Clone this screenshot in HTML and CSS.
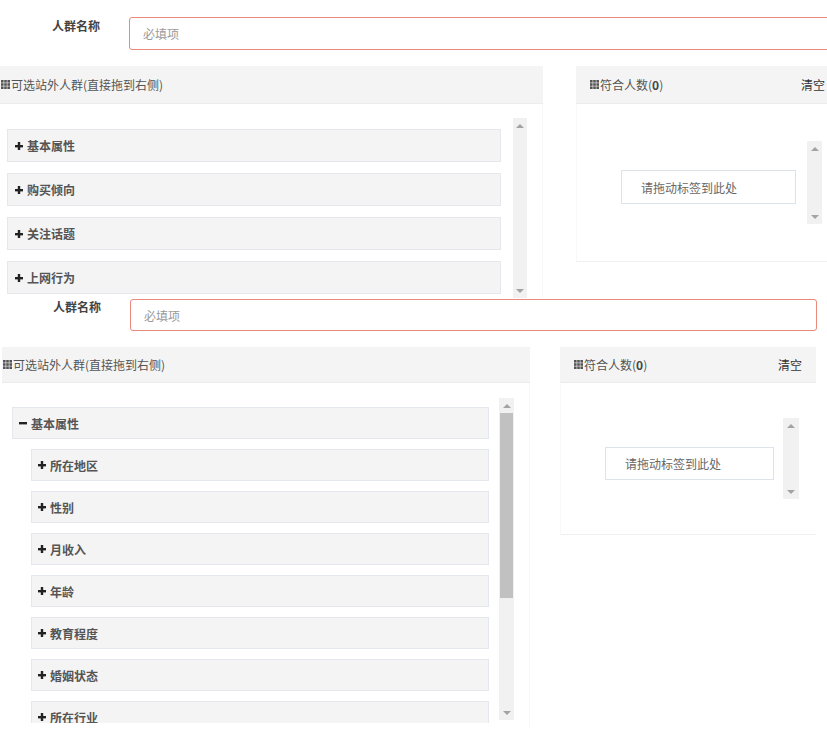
FILE: index.html
```html
<!DOCTYPE html>
<html lang="zh-CN">

<head>
  <meta charset="UTF-8">
  <meta name="viewport" content="width=device-width, initial-scale=1.0">
  <title>人群标签</title>
  <link rel="stylesheet" href="styles.css">
</head>

<body>
  <!-- collapsed state -->
  <div class="shot shot-a">
    <div class="form-row">
      <label class="form-label">人群名称</label>
      <input class="form-input" type="text" placeholder="必填项">
    </div>
    <div class="panels">
      <div class="panel panel-left">
        <div class="panel-head">
          <svg class="grid-icon" viewBox="0 0 9 9"><rect x="0" y="0" width="2.6" height="2.6"/><rect x="3.2" y="0" width="2.6" height="2.6"/><rect x="6.4" y="0" width="2.6" height="2.6"/><rect x="0" y="3.2" width="2.6" height="2.6"/><rect x="3.2" y="3.2" width="2.6" height="2.6"/><rect x="6.4" y="3.2" width="2.6" height="2.6"/><rect x="0" y="6.4" width="2.6" height="2.6"/><rect x="3.2" y="6.4" width="2.6" height="2.6"/><rect x="6.4" y="6.4" width="2.6" height="2.6"/></svg>
          <span>可选站外人群(直接拖到右侧)</span>
        </div>
        <div class="panel-body">
          <div class="tag-list">
            <div class="tag-item"><svg class="toggle" viewBox="0 0 8 8"><rect x="0" y="3" width="8" height="2.4"/><rect x="2.8" y="0" width="2.4" height="8"/></svg>基本属性</div>
            <div class="tag-item"><svg class="toggle" viewBox="0 0 8 8"><rect x="0" y="3" width="8" height="2.4"/><rect x="2.8" y="0" width="2.4" height="8"/></svg>购买倾向</div>
            <div class="tag-item"><svg class="toggle" viewBox="0 0 8 8"><rect x="0" y="3" width="8" height="2.4"/><rect x="2.8" y="0" width="2.4" height="8"/></svg>关注话题</div>
            <div class="tag-item"><svg class="toggle" viewBox="0 0 8 8"><rect x="0" y="3" width="8" height="2.4"/><rect x="2.8" y="0" width="2.4" height="8"/></svg>上网行为</div>
          </div>
          <div class="scrollbar">
            <span class="arrow-up"></span>
            <span class="arrow-down"></span>
          </div>
        </div>
      </div>
      <div class="panel panel-right">
        <div class="panel-head">
          <div class="head-title">
            <svg class="grid-icon" viewBox="0 0 9 9"><rect x="0" y="0" width="2.6" height="2.6"/><rect x="3.2" y="0" width="2.6" height="2.6"/><rect x="6.4" y="0" width="2.6" height="2.6"/><rect x="0" y="3.2" width="2.6" height="2.6"/><rect x="3.2" y="3.2" width="2.6" height="2.6"/><rect x="6.4" y="3.2" width="2.6" height="2.6"/><rect x="0" y="6.4" width="2.6" height="2.6"/><rect x="3.2" y="6.4" width="2.6" height="2.6"/><rect x="6.4" y="6.4" width="2.6" height="2.6"/></svg>
            <span>符合人数(<b>0</b>)</span>
          </div>
          <span class="clear-btn">清空</span>
        </div>
        <div class="drop-body">
          <div class="drop-box">请拖动标签到此处</div>
          <div class="scrollbar small">
            <span class="arrow-up"></span>
            <span class="arrow-down"></span>
          </div>
        </div>
      </div>
    </div>
  </div>

  <!-- expanded state -->
  <div class="shot shot-b">
    <div class="form-row">
      <label class="form-label">人群名称</label>
      <input class="form-input" type="text" placeholder="必填项">
    </div>
    <div class="panels">
      <div class="panel panel-left">
        <div class="panel-head">
          <svg class="grid-icon" viewBox="0 0 9 9"><rect x="0" y="0" width="2.6" height="2.6"/><rect x="3.2" y="0" width="2.6" height="2.6"/><rect x="6.4" y="0" width="2.6" height="2.6"/><rect x="0" y="3.2" width="2.6" height="2.6"/><rect x="3.2" y="3.2" width="2.6" height="2.6"/><rect x="6.4" y="3.2" width="2.6" height="2.6"/><rect x="0" y="6.4" width="2.6" height="2.6"/><rect x="3.2" y="6.4" width="2.6" height="2.6"/><rect x="6.4" y="6.4" width="2.6" height="2.6"/></svg>
          <span>可选站外人群(直接拖到右侧)</span>
        </div>
        <div class="panel-body">
          <div class="tag-list">
            <div class="tag-item"><svg class="toggle" viewBox="0 0 8 8"><rect x="0" y="3" width="8" height="2.4"/></svg>基本属性</div>
            <div class="tag-item child"><svg class="toggle" viewBox="0 0 8 8"><rect x="0" y="3" width="8" height="2.4"/><rect x="2.8" y="0" width="2.4" height="8"/></svg>所在地区</div>
            <div class="tag-item child"><svg class="toggle" viewBox="0 0 8 8"><rect x="0" y="3" width="8" height="2.4"/><rect x="2.8" y="0" width="2.4" height="8"/></svg>性别</div>
            <div class="tag-item child"><svg class="toggle" viewBox="0 0 8 8"><rect x="0" y="3" width="8" height="2.4"/><rect x="2.8" y="0" width="2.4" height="8"/></svg>月收入</div>
            <div class="tag-item child"><svg class="toggle" viewBox="0 0 8 8"><rect x="0" y="3" width="8" height="2.4"/><rect x="2.8" y="0" width="2.4" height="8"/></svg>年龄</div>
            <div class="tag-item child"><svg class="toggle" viewBox="0 0 8 8"><rect x="0" y="3" width="8" height="2.4"/><rect x="2.8" y="0" width="2.4" height="8"/></svg>教育程度</div>
            <div class="tag-item child"><svg class="toggle" viewBox="0 0 8 8"><rect x="0" y="3" width="8" height="2.4"/><rect x="2.8" y="0" width="2.4" height="8"/></svg>婚姻状态</div>
            <div class="tag-item child"><svg class="toggle" viewBox="0 0 8 8"><rect x="0" y="3" width="8" height="2.4"/><rect x="2.8" y="0" width="2.4" height="8"/></svg>所在行业</div>
          </div>
          <div class="scrollbar">
            <span class="arrow-up"></span>
            <span class="thumb"></span>
            <span class="arrow-down"></span>
          </div>
        </div>
      </div>
      <div class="panel panel-right">
        <div class="panel-head">
          <div class="head-title">
            <svg class="grid-icon" viewBox="0 0 9 9"><rect x="0" y="0" width="2.6" height="2.6"/><rect x="3.2" y="0" width="2.6" height="2.6"/><rect x="6.4" y="0" width="2.6" height="2.6"/><rect x="0" y="3.2" width="2.6" height="2.6"/><rect x="3.2" y="3.2" width="2.6" height="2.6"/><rect x="6.4" y="3.2" width="2.6" height="2.6"/><rect x="0" y="6.4" width="2.6" height="2.6"/><rect x="3.2" y="6.4" width="2.6" height="2.6"/><rect x="6.4" y="6.4" width="2.6" height="2.6"/></svg>
            <span>符合人数(<b>0</b>)</span>
          </div>
          <span class="clear-btn">清空</span>
        </div>
        <div class="drop-body">
          <div class="drop-box">请拖动标签到此处</div>
          <div class="scrollbar small">
            <span class="arrow-up"></span>
            <span class="arrow-down"></span>
          </div>
        </div>
      </div>
    </div>
  </div>
</body>

</html>
```

FILE: styles.css
```css
* {
  margin: 0;
  padding: 0;
  box-sizing: border-box;
}

html,
body {
  font-family: "Noto Sans CJK SC", "Liberation Sans", sans-serif;
  font-size: 12px;
  color: #555;
  background-color: #fff;
}

body {
  width: 827px;
  overflow: hidden;
}

.shot {
  width: 827px;
  overflow: hidden;
}

/* form */
.form-row {
  display: flex;
  align-items: flex-start;
}

.form-label {
  flex: none;
  line-height: 16px;
  text-align: right;
  font-weight: bold;
  color: #444;
}

.form-input {
  flex: none;
  border: 1px solid #e98a7c;
  border-radius: 3px;
  padding: 0 13px;
  font-family: inherit;
  font-size: 12px;
  color: #333;
  outline: none;
}

.form-input::placeholder {
  color: #999;
}

/* panels */
.panels {
  display: flex;
  align-items: flex-start;
  margin-top: 16px;
}

.panel {
  flex: none;
}

.panel-head {
  display: flex;
  align-items: center;
  background-color: #f4f4f4;
  border-bottom: 1px solid #ececec;
  color: #555;
  white-space: nowrap;
}

.head-title {
  display: flex;
  align-items: center;
}

.head-title b {
  color: #444;
}

.clear-btn {
  margin-left: auto;
  color: #333;
}

.grid-icon {
  width: 9px;
  height: 9px;
  fill: #555;
  margin-right: 1px;
  flex: none;
}

.panel-body {
  display: flex;
  align-items: flex-start;
  border-right: 1px solid #f8f8f8;
}

.tag-list {
  flex: none;
  overflow: hidden;
}

.tag-item {
  display: flex;
  align-items: center;
  background-color: #f4f4f4;
  border: 1px solid #e4e7eb;
  font-weight: bold;
  color: #555;
}

.toggle {
  width: 8px;
  height: 8px;
  fill: #222;
  margin-right: 4px;
  flex: none;
}

/* scrollbars */
.scrollbar {
  flex: none;
  display: flex;
  flex-direction: column;
  align-items: center;
  background-color: #f1f1f1;
  padding: 6px 0 5px;
}

.arrow-up,
.arrow-down {
  width: 0;
  height: 0;
  border-left: 4px solid transparent;
  border-right: 4px solid transparent;
}

.arrow-up {
  border-bottom: 4px solid #a3a3a3;
}

.arrow-down {
  margin-top: auto;
  border-top: 4px solid #a3a3a3;
}

.thumb {
  width: 13px;
  margin-top: 5px;
  height: 185px;
  background-color: #c1c1c1;
}

/* drop area */
.drop-body {
  display: flex;
  align-items: flex-start;
  border-left: 1px solid #f8f8f8;
  border-bottom: 1px solid #f0f0f0;
}

.drop-box {
  flex: none;
  display: flex;
  align-items: center;
  padding-left: 19px;
  border: 1px solid #dde3ea;
  color: #666;
}

/* collapsed screenshot */
.shot-a {
  height: 298px;
}

.shot-a .form-row {
  padding-top: 17px;
}

.shot-a .form-label {
  width: 129px;
  padding-right: 29px;
  padding-top: 1px;
}

.shot-a .form-input {
  width: 720px;
  height: 33px;
}

.shot-a .panel-left {
  width: 543px;
}

.shot-a .panel-right {
  width: 263px;
  margin-left: 33px;
}

.shot-a .panel-head {
  height: 38px;
  padding-left: 1px;
}

.shot-a .panel-right .panel-head {
  padding: 0 14px;
}

.shot-a .panel-body {
  padding-top: 14px;
  height: 200px;
}

.shot-a .tag-list {
  margin-left: 7px;
  width: 494px;
  padding-top: 11px;
}

.shot-a .tag-item {
  height: 33px;
  margin-bottom: 11px;
  padding-left: 7px;
}

.shot-a .panel-body .scrollbar {
  margin-left: 12px;
  width: 14px;
  height: 180px;
}

.shot-a .drop-body {
  height: 158px;
}

.shot-a .drop-box {
  margin-left: 44px;
  margin-top: 66px;
  width: 175px;
  height: 34px;
}

.shot-a .scrollbar.small {
  margin-left: 11px;
  margin-top: 37px;
  width: 15px;
  height: 83px;
}

/* expanded screenshot */
.shot-b {
  height: 431px;
}

.shot-b .form-row {
  padding-top: 1px;
}

.shot-b .form-label {
  width: 130px;
  padding-right: 29px;
}

.shot-b .form-input {
  width: 687px;
  height: 32px;
}

.shot-b .panel-left {
  width: 528px;
  margin-left: 2px;
}

.shot-b .panel-right {
  width: 256px;
  margin-left: 30px;
}

.shot-b .panel-head {
  height: 36px;
  padding-left: 1px;
}

.shot-b .panel-right .panel-head {
  padding: 0 14px;
}

.shot-b .panel-body {
  padding-top: 15px;
  height: 345px;
}

.shot-b .tag-list {
  margin-left: 10px;
  width: 477px;
  padding-top: 9px;
  height: 325px;
}

.shot-b .tag-item {
  height: 32px;
  margin-bottom: 10px;
  padding-left: 6px;
}

.shot-b .tag-item.child {
  margin-left: 19px;
}

.shot-b .panel-body .scrollbar {
  margin-left: 10px;
  width: 15px;
  height: 322px;
}

.shot-b .drop-body {
  height: 152px;
}

.shot-b .drop-box {
  margin-left: 44px;
  margin-top: 64px;
  width: 169px;
  height: 33px;
}

.shot-b .scrollbar.small {
  margin-left: 9px;
  margin-top: 35px;
  width: 16px;
  height: 81px;
}
```
